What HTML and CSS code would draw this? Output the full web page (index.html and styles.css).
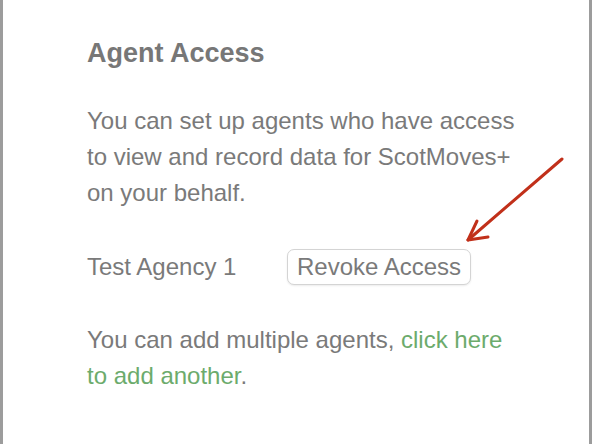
FILE: index.html
```html
<!DOCTYPE html>
<html lang="en">
<head>
    <meta charset="UTF-8">
    <meta name="viewport" content="width=device-width, initial-scale=1.0">
    <title>Agent Access</title>
    <link rel="stylesheet" href="styles.css">
</head>
<body>
    <div class="panel">
        <h2>Agent Access</h2>
        <p class="intro">You can set up agents who have access to view and record data for ScotMoves+ on your behalf.</p>

        <div class="agent-row">
            <span class="agent-name">Test Agency 1</span>
            <button type="button" class="revoke-btn">Revoke Access</button>
        </div>

        <p class="add-more">You can add multiple agents, <a href="#" class="add-link">click here to add another</a>.</p>

        <!-- annotation arrow pointing at the button -->
        <svg class="pointer-arrow" width="120" height="100" viewBox="0 0 120 100">
            <path d="M97 6 L3 87" stroke="#c1301a" stroke-width="3" stroke-linecap="round" fill="none"/>
            <path d="M12 68 L3 87 L23 84" stroke="#c1301a" stroke-width="3" stroke-linecap="round" stroke-linejoin="round" fill="none"/>
        </svg>
    </div>
</body>
</html>
```

FILE: styles.css
```css
body {
    margin: 0;
    font-family: "Liberation Sans", Arial, sans-serif;
    background: #fff;
}

.panel {
    position: relative;
    min-height: 444px;
    box-sizing: border-box;
    border-left: 3px solid #9c9c9c;
    border-right: 3px solid #9c9c9c;
    padding: 37px 40px 0 84px;
    color: #7a7a7a;
}

.panel h2 {
    margin: 0 0 34px 0;
    font-size: 27px;
    font-weight: bold;
    line-height: 32px;
    color: #777;
}

.intro {
    margin: 0;
    font-size: 24px;
    line-height: 36px;
    max-width: 440px;
}

.agent-row {
    display: flex;
    align-items: center;
    margin-top: 38px;
}

.agent-name {
    width: 200px;
    font-size: 24px;
}

.revoke-btn {
    font-family: inherit;
    font-size: 24px;
    color: #7a7a7a;
    background: #fff;
    border: 1px solid #d4d4d4;
    border-radius: 7px;
    padding: 3px 9px;
    box-shadow: 0 1px 2px rgba(0,0,0,0.08);
}

.add-more {
    margin: 37px 0 0 0;
    font-size: 24px;
    line-height: 36px;
    max-width: 440px;
}

.add-link {
    color: #6cab6c;
    text-decoration: none;
}

.pointer-arrow {
    position: absolute;
    left: 462px;
    top: 153px;
}
```
